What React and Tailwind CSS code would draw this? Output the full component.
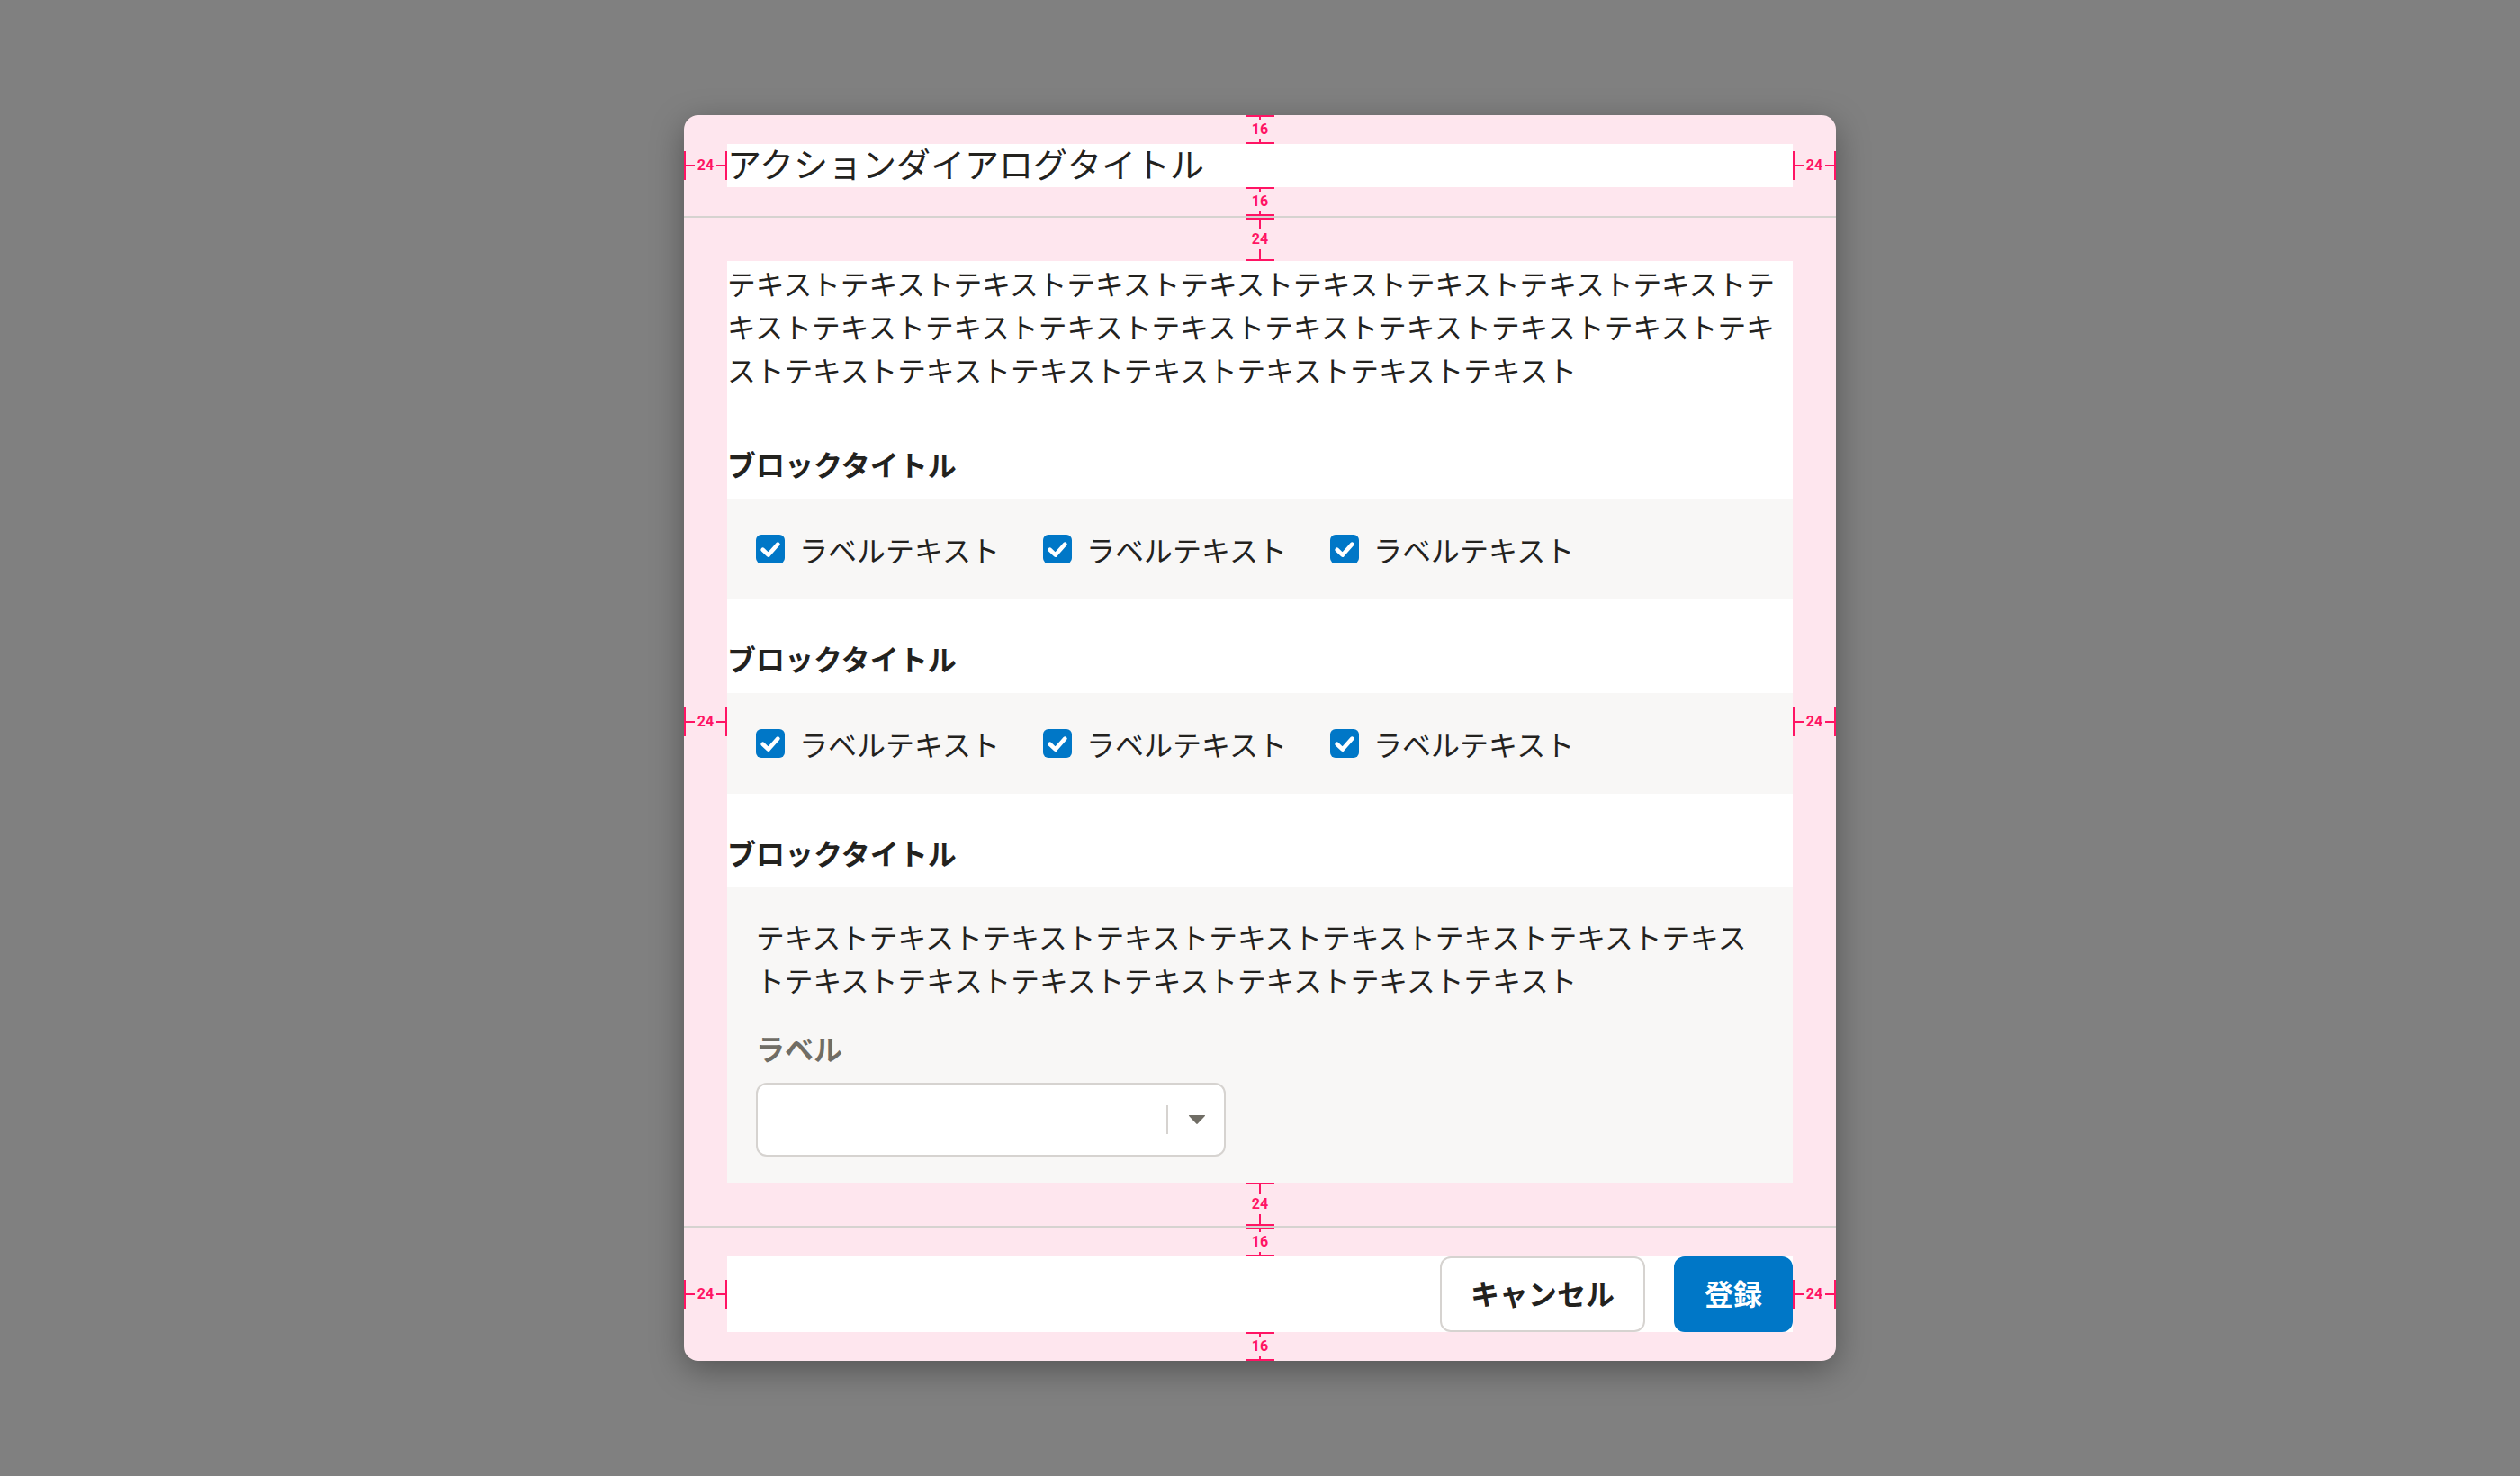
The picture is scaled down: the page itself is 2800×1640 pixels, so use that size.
import React from 'react'

const MARK = 'bg-[#ff1464]'

// vertical spacing marker (caps top and bottom, number in the middle)
const VMark = ({ label, h, className }) => (
    <div className={`absolute left-1/2 -translate-x-1/2 w-[32px] flex flex-col items-center ${h} ${className}`}>
        <div className={`h-[2px] w-full ${MARK}`} />
        <div className={`w-[2px] flex-1 ${MARK}`} />
        <span className="py-[3px] font-['Roboto',sans-serif] text-[16px] font-bold leading-none text-[#ff1464]">{label}</span>
        <div className={`w-[2px] flex-1 ${MARK}`} />
        <div className={`h-[2px] w-full ${MARK}`} />
    </div>
)

// horizontal spacing marker (caps left and right)
const HMark = ({ label, className }) => (
    <div className={`absolute top-1/2 -translate-y-1/2 h-[32px] w-[48px] flex items-center ${className}`}>
        <div className={`w-[2px] h-full ${MARK}`} />
        <div className={`h-[2px] flex-1 ${MARK}`} />
        <span className="px-[3px] font-['Roboto',sans-serif] text-[16px] font-bold leading-none text-[#ff1464]">{label}</span>
        <div className={`h-[2px] flex-1 ${MARK}`} />
        <div className={`w-[2px] h-full ${MARK}`} />
    </div>
)

const Check = () => (
    <svg width="32" height="32" viewBox="0 0 16 16">
        <rect x="0" y="0" width="16" height="16" rx="3" fill="#0077c7" />
        <path d="M3.8 8.4 L6.9 11.3 L12.2 5.3" fill="none" stroke="#fff" strokeWidth="2.3" strokeLinecap="round" strokeLinejoin="round" />
    </svg>
)

const CheckItem = () => (
    <label className="flex items-center gap-[16px]">
        <Check />
        <span className="text-[32px] leading-[48px]">ラベルテキスト</span>
    </label>
)

const CheckRow = () => (
    <div className="flex gap-[48px] bg-[#f8f7f6] px-[32px] py-[32px]">
        <CheckItem />
        <CheckItem />
        <CheckItem />
    </div>
)

const BlockTitle = ({ children }) => (
    <h3 className="mb-[22px] text-[32px] font-bold leading-[34px]">{children}</h3>
)

const App = () => {
    return (
        <div className="flex h-screen w-full items-center justify-center bg-[#808080] font-['Noto_Sans_CJK_JP','Noto_Sans',sans-serif] text-[#23221e]">
            <div className="w-[1280px] rounded-[16px] bg-[#fee6ee] shadow-[0_10px_36px_rgba(0,0,0,0.35)]">
                {/* Header */}
                <div className="relative px-[48px] py-[32px]">
                    <h2 className="bg-white pb-[6px] text-[38px] leading-[42px]">アクションダイアログタイトル</h2>
                    <VMark label="16" h="h-[32px]" className="top-0" />
                    <VMark label="16" h="h-[32px]" className="bottom-0" />
                    <HMark label="24" className="left-0" />
                    <HMark label="24" className="right-0" />
                </div>
                <div className="h-[2px] bg-[#d6d3d0]" />

                {/* Body */}
                <div className="relative px-[48px] py-[48px]">
                    <div className="bg-white">
                        <p className="mb-[64px] text-[31.7px] leading-[48px]">
                            テキストテキストテキストテキストテキストテキストテキストテキストテキストテキストテキストテキストテキストテキストテキストテキストテキストテキストテキストテキストテキストテキストテキストテキストテキストテキスト
                        </p>
                        <BlockTitle>ブロックタイトル</BlockTitle>
                        <CheckRow />
                        <div className="h-[48px]" />
                        <BlockTitle>ブロックタイトル</BlockTitle>
                        <CheckRow />
                        <div className="h-[48px]" />
                        <BlockTitle>ブロックタイトル</BlockTitle>
                        <div className="bg-[#f8f7f6] px-[32px] pt-[30px] pb-[29px]">
                            <p className="mb-[32px] text-[31.7px] leading-[48px]">
                                テキストテキストテキストテキストテキストテキストテキストテキストテキストテキストテキストテキストテキストテキストテキストテキスト
                            </p>
                            <div className="mb-[19px] text-[32px] font-bold leading-[40px] text-[#706d65]">ラベル</div>
                            <div className="flex h-[82px] w-[522px] items-center justify-end gap-[22px] rounded-[12px] border-2 border-[#d6d3d0] bg-white pr-[20px]">
                                <div className="h-[32px] w-[2px] bg-[#d6d3d0]" />
                                <svg width="20" height="12" viewBox="0 0 20 12">
                                    <path d="M1.5 1 H18.5 Q19.6 1 18.8 2 L10.8 10.6 Q10 11.4 9.2 10.6 L1.2 2 Q0.4 1 1.5 1 Z" fill="#706d65" />
                                </svg>
                            </div>
                        </div>
                    </div>
                    <VMark label="24" h="h-[48px]" className="top-0" />
                    <VMark label="24" h="h-[48px]" className="bottom-0" />
                    <HMark label="24" className="left-0" />
                    <HMark label="24" className="right-0" />
                </div>
                <div className="h-[2px] bg-[#d6d3d0]" />

                {/* Footer */}
                <div className="relative px-[48px] py-[32px]">
                    <div className="flex justify-end gap-[32px] bg-white">
                        <button className="flex h-[84px] items-center rounded-[12px] border-2 border-[#d6d3d0] bg-white px-[32px] pb-[4px] text-[32px] font-bold leading-none text-[#23221e]">
                            キャンセル
                        </button>
                        <button className="flex h-[84px] items-center rounded-[12px] border-2 border-[#0077c7] bg-[#0077c7] px-[32px] pb-[4px] text-[32px] font-bold leading-none text-white">
                            登録
                        </button>
                    </div>
                    <VMark label="16" h="h-[32px]" className="top-0" />
                    <VMark label="16" h="h-[32px]" className="bottom-0" />
                    <HMark label="24" className="left-0" />
                    <HMark label="24" className="right-0" />
                </div>
            </div>
        </div>
    )
}

export default App
